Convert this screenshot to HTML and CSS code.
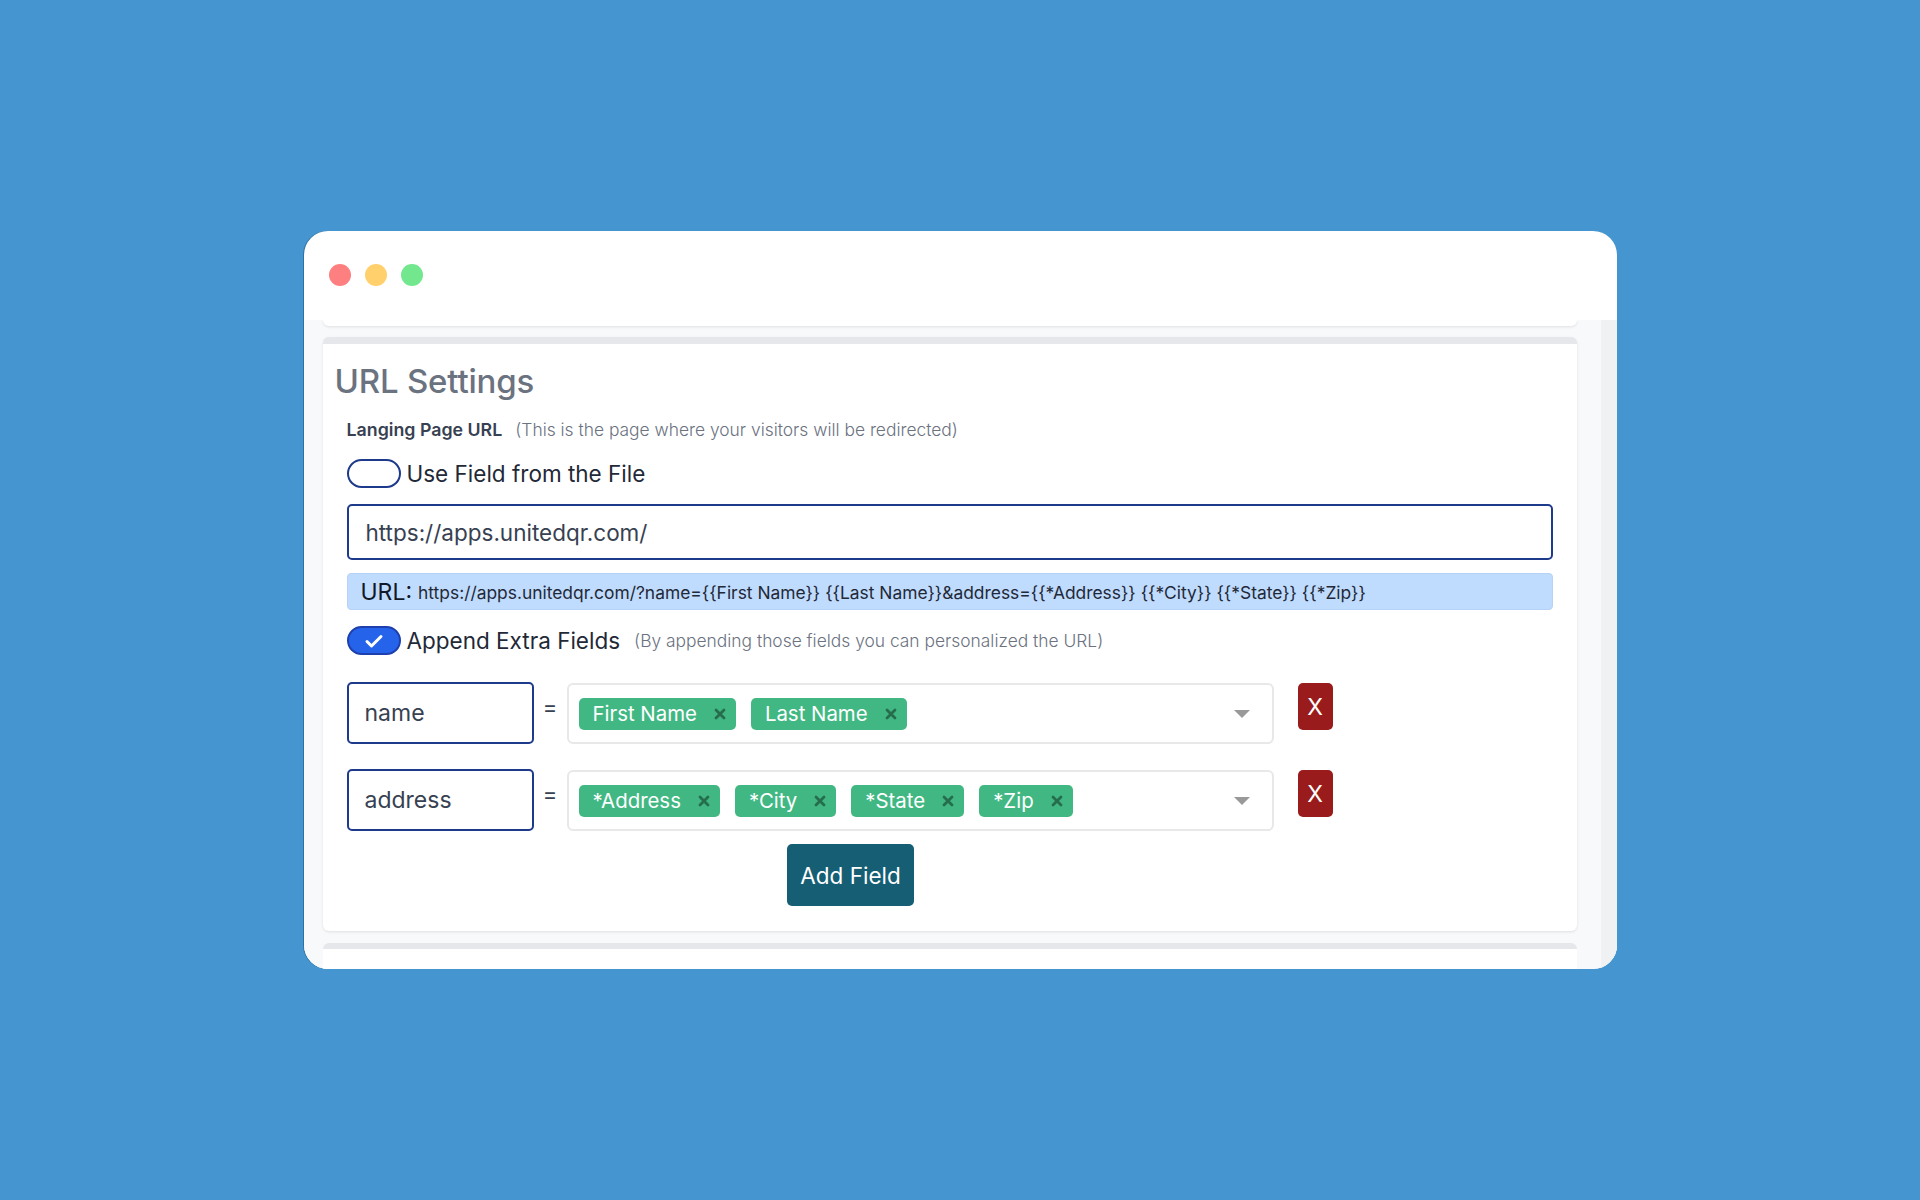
FILE: index.html
```html
<!DOCTYPE html>
<html lang="en">
<head>
    <meta charset="UTF-8">
    <meta name="viewport" content="width=device-width, initial-scale=1.0">
    <title>URL Settings</title>
    <link rel="stylesheet" href="styles.css">
</head>
<body>
    <div class="window">
        <div class="titlebar">
            <span class="dot dot-red"></span>
            <span class="dot dot-yellow"></span>
            <span class="dot dot-green"></span>
        </div>
        <div class="window-body">
            <div class="scroll-area">
                <div class="card card-prev"></div>

                <div class="card">
                    <h2 class="card-title">URL Settings</h2>
                    <div class="section">
                        <div class="label-row">
                            <span class="label">Langing Page URL</span>
                            <span class="hint">(This is the page where your visitors will be redirected)</span>
                        </div>

                        <div class="toggle-row toggle-row-1">
                            <span class="toggle"></span>
                            <span class="toggle-text">Use Field from the File</span>
                        </div>

                        <input class="url-input" type="text" value="https://apps.unitedqr.com/">

                        <div class="url-preview">
                            <span class="url-preview-label">URL:</span>
                            <span class="url-preview-value">https://apps.unitedqr.com/?name={{First Name}} {{Last Name}}&amp;address={{*Address}} {{*City}} {{*State}} {{*Zip}}</span>
                        </div>

                        <div class="toggle-row toggle-row-2">
                            <span class="toggle toggle-on">
                                <svg width="20" height="16" viewBox="0 0 20 16"><path d="M3 8.5l4.5 4.5L17 3.5" fill="none" stroke="#fff" stroke-width="3" stroke-linecap="round" stroke-linejoin="round"/></svg>
                            </span>
                            <span class="toggle-text">Append Extra Fields</span>
                            <span class="hint hint-2">(By appending those fields you can personalized the URL)</span>
                        </div>

                        <div class="field-row">
                            <input class="key-input" type="text" value="name">
                            <span class="equals">=</span>
                            <div class="multiselect">
                                <div class="tags">
                                    <span class="tag">First Name <i class="tag-x"><svg width="12" height="12" viewBox="0 0 12 12"><path d="M2 2l8 8M10 2l-8 8" stroke="#266d4d" stroke-width="2.8" stroke-linecap="round"/></svg></i></span>
                                    <span class="tag">Last Name <i class="tag-x"><svg width="12" height="12" viewBox="0 0 12 12"><path d="M2 2l8 8M10 2l-8 8" stroke="#266d4d" stroke-width="2.8" stroke-linecap="round"/></svg></i></span>
                                </div>
                                <span class="caret"></span>
                            </div>
                            <button class="remove-btn" type="button">X</button>
                        </div>

                        <div class="field-row">
                            <input class="key-input" type="text" value="address">
                            <span class="equals">=</span>
                            <div class="multiselect">
                                <div class="tags">
                                    <span class="tag">*Address <i class="tag-x"><svg width="12" height="12" viewBox="0 0 12 12"><path d="M2 2l8 8M10 2l-8 8" stroke="#266d4d" stroke-width="2.8" stroke-linecap="round"/></svg></i></span>
                                    <span class="tag">*City <i class="tag-x"><svg width="12" height="12" viewBox="0 0 12 12"><path d="M2 2l8 8M10 2l-8 8" stroke="#266d4d" stroke-width="2.8" stroke-linecap="round"/></svg></i></span>
                                    <span class="tag">*State <i class="tag-x"><svg width="12" height="12" viewBox="0 0 12 12"><path d="M2 2l8 8M10 2l-8 8" stroke="#266d4d" stroke-width="2.8" stroke-linecap="round"/></svg></i></span>
                                    <span class="tag">*Zip <i class="tag-x"><svg width="12" height="12" viewBox="0 0 12 12"><path d="M2 2l8 8M10 2l-8 8" stroke="#266d4d" stroke-width="2.8" stroke-linecap="round"/></svg></i></span>
                                </div>
                                <span class="caret"></span>
                            </div>
                            <button class="remove-btn" type="button">X</button>
                        </div>

                        <div class="add-row">
                            <button class="add-btn" type="button">Add Field</button>
                        </div>
                    </div>
                </div>

                <div class="card card-next"></div>
            </div>
            <div class="scrollbar"></div>
        </div>
    </div>
</body>
</html>
```

FILE: styles.css
```css
* {
    box-sizing: border-box;
}
body {
    font-family: Inter, "Noto Sans", sans-serif;
    margin: 0;
    padding: 0;
    height: 100vh;
    background-color: #4495d0;
    display: flex;
    align-items: center;
    justify-content: center;
}
.window {
    width: 1313px;
    height: 738px;
    background-color: #fff;
    border-radius: 24px;
    overflow: hidden;
    display: flex;
    flex-direction: column;
    box-shadow: -1px 0 0 rgba(20, 80, 110, 0.5);
}
.titlebar {
    height: 89px;
    flex-shrink: 0;
    display: flex;
    align-items: center;
    gap: 14px;
    padding-left: 25px;
    padding-bottom: 1px;
}
.dot {
    width: 22px;
    height: 22px;
    border-radius: 50%;
}
.dot-red {
    background-color: #fe7f7f;
}
.dot-yellow {
    background-color: #ffd06b;
}
.dot-green {
    background-color: #72e78e;
}
.window-body {
    flex: 1;
    display: flex;
    background-color: #f8f9fb;
    overflow: hidden;
}
.scroll-area {
    flex: 1;
    padding: 0 24px 0 19px;
}
.scrollbar {
    width: 16px;
    background-color: #f0f1f3;
}
.card {
    background-color: #fff;
    border-top: 7px solid #e5e7eb;
    border-radius: 6px;
    box-shadow: 0 1px 3px rgba(0, 0, 0, 0.1);
    margin-top: 11px;
    padding: 10px 12px 25px;
}
.card-prev {
    height: 6px;
    margin-top: 0;
    padding: 0;
    border-top: none;
    border-radius: 0 0 6px 6px;
}
.card-next {
    height: 40px;
    margin-top: 12px;
    border-top-width: 6px;
    box-shadow: none;
}
.card-title {
    margin: 0;
    font-size: 33px;
    font-weight: 500;
    line-height: 54px;
    color: #6b7280;
    letter-spacing: -0.2px;
}
.section {
    padding: 0 12px;
}
.label-row {
    display: flex;
    align-items: baseline;
    gap: 13px;
    height: 40px;
    padding-top: 11px;
}
.label {
    font-size: 17.8px;
    font-weight: 600;
    color: #374151;
}
.hint {
    font-size: 17.4px;
    font-weight: 300;
    color: #6b7280;
}
.toggle-row {
    display: flex;
    align-items: center;
    gap: 6px;
}
.toggle-row-1 {
    margin-top: 11px;
}
.toggle {
    width: 54px;
    height: 29px;
    border: 2px solid #1e3a8a;
    border-radius: 15px;
    display: flex;
    align-items: center;
    justify-content: center;
}
.toggle-on {
    background-color: #2563eb;
    border-color: #1e40af;
}
.toggle-text {
    font-size: 22.5px;
    color: #1f2937;
}
.hint-2 {
    font-size: 17.4px;
    margin-left: 8px;
}
.url-input {
    display: block;
    width: 100%;
    height: 56px;
    margin-top: 16px;
    padding: 0 17px;
    border: 2px solid #1e3a8a;
    border-radius: 5px;
    font-family: inherit;
    font-size: 22.5px;
    color: #374151;
    outline: none;
}
.url-preview {
    display: flex;
    align-items: center;
    gap: 6px;
    height: 37px;
    margin-top: 13px;
    padding: 0 13px;
    background-color: #bfdbfe;
    border-radius: 4px;
    border: 1px solid #b6d3f7;
}
.url-preview-label {
    font-size: 23px;
    color: #111827;
}
.url-preview-value {
    font-size: 17.4px;
    color: #1f2937;
    padding-top: 1px;
}
.toggle-row-2 {
    margin-top: 16px;
}
.field-row {
    display: flex;
    align-items: flex-start;
    margin-top: 27px;
}
.field-row + .field-row {
    margin-top: 25px;
}
.key-input {
    width: 187px;
    height: 62px;
    padding: 0 16px;
    border: 2px solid #1e3a8a;
    border-radius: 5px;
    font-family: inherit;
    font-size: 23px;
    color: #374151;
    outline: none;
}
.equals {
    width: 33px;
    text-align: center;
    font-size: 22px;
    color: #374151;
    line-height: 50px;
}
.multiselect {
    width: 707px;
    height: 61px;
    margin-top: 1px;
    border: 2px solid #e8e8e8;
    border-radius: 6px;
    display: flex;
    align-items: center;
    justify-content: space-between;
    padding: 0 22px 0 10px;
}
.tags {
    display: flex;
    gap: 15px;
}
.tag {
    display: flex;
    align-items: center;
    height: 32px;
    padding: 0 10px 0 14px;
    gap: 17px;
    background-color: #41b883;
    color: #fff;
    border-radius: 5px;
    font-size: 20.4px;
}
.tag-x {
    display: flex;
}
.caret {
    width: 0;
    height: 0;
    border-left: 8px solid transparent;
    border-right: 8px solid transparent;
    border-top: 8px solid #999;
}
.remove-btn {
    width: 35px;
    height: 47px;
    margin-left: 24px;
    margin-top: 1px;
    border: none;
    border-radius: 5px;
    background-color: #991b1b;
    color: #fff;
    font-family: inherit;
    font-size: 23px;
    padding: 0;
    cursor: pointer;
}
.add-row {
    width: 1008px;
    display: flex;
    justify-content: center;
    margin-top: 13px;
}
.add-btn {
    width: 127px;
    height: 62px;
    border: none;
    border-radius: 5px;
    background-color: #165e74;
    color: #fff;
    font-family: inherit;
    font-size: 22.5px;
    cursor: pointer;
}
```
